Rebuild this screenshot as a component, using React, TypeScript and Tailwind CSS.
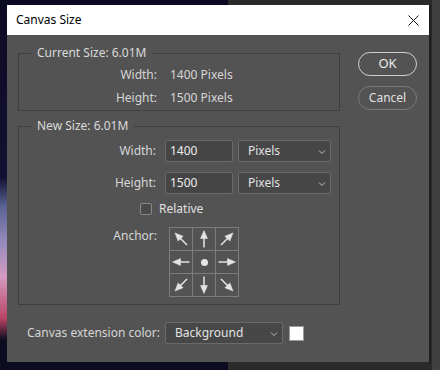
import React from "react";

const font = "font-['Noto_Sans','Liberation_Sans',sans-serif]";

function Arrow({ angle }: { angle: number }) {
  return (
    <svg width="22" height="22" viewBox="0 0 22 22">
      <g transform={`rotate(${angle} 11 11)`} fill="#e4e4e4" stroke="#e4e4e4">
        <polygon points="11,2.5 7.5,10.5 14.5,10.5" strokeWidth="0.5" />
        <line x1="11" y1="10" x2="11" y2="19.5" strokeWidth="1.5" />
      </g>
    </svg>
  );
}

function Chevron() {
  return (
    <svg width="8" height="6" viewBox="0 0 8 6" className="mt-[2px]">
      <path d="M1 1.5 L4 4.5 L7 1.5" fill="none" stroke="#bdbdbd" strokeWidth="1" />
    </svg>
  );
}

function Select({ value, className }: { value: string; className: string }) {
  return (
    <div
      className={`flex h-[22px] items-center justify-between rounded-[2px] border border-[#6a6a6a] bg-[#474747] pl-[9px] pr-[4px] text-[12px] text-[#e2e2e2] ${className}`}
    >
      <span>{value}</span>
      <Chevron />
    </div>
  );
}

function Group({ legend, className, children }: { legend: string; className: string; children: React.ReactNode }) {
  return (
    <div className={`relative border border-[#3f3f3f] ${className}`}>
      <span className="absolute left-[12px] top-[-9px] bg-[#535353] px-[6px] text-[12px] leading-[16px] text-[#dadada]">
        {legend}
      </span>
      {children}
    </div>
  );
}

function Field({ label, value }: { label: string; value: string }) {
  return (
    <div className="flex h-[22px] items-center">
      <span className="w-[138px] pr-[1px] text-right">{label}</span>
      <div className="ml-[8px] flex h-[22px] w-[68px] items-center rounded-[2px] border border-[#696969] bg-[#454545] pl-[4px] text-[#ececec]">
        {value}
      </div>
      <Select value="Pixels" className="ml-[5px] w-[93px]" />
    </div>
  );
}

export default function App() {
  const anchors: (number | null)[] = [-45, 0, 45, -90, null, 90, -135, 180, 135];

  return (
    <div className={`relative h-[370px] w-[440px] overflow-hidden bg-[#2a2a2a] ${font}`}>
      <div className="absolute inset-y-0 left-0 w-[228px] bg-[linear-gradient(180deg,#0c0a22_0%,#131133_48%,#5a6494_56%,#9a8cc0_66%,#d49ac0_75%,#b84464_86%,#0b0c20_92%)]" />
      <div className="absolute inset-y-0 right-0 w-[8px] bg-[#404040]" />

      <div className="absolute left-[7px] top-[5px] flex h-[357px] w-[422px] flex-col bg-[#535353] shadow-[2px_0_0_#1f1f1f]">
        <div className="flex h-[30px] items-center justify-between bg-white pl-[9px] pr-[10px] text-[12px] text-black">
          <span>Canvas Size</span>
          <svg width="11" height="11" viewBox="0 0 11 11">
            <path d="M0.5 0.5 L10.5 10.5 M10.5 0.5 L0.5 10.5" stroke="#111" strokeWidth="1" />
          </svg>
        </div>

        <div className="flex flex-col px-[11px] pt-[18px] text-[12px] text-[#d6d6d6]">
          <div className="flex">
            <div className="flex w-[322px] flex-col">
              <Group legend="Current Size: 6.01M" className="h-[58px]">
                <div className="grid grid-cols-[138px_1fr] gap-x-[13px] gap-y-[7px] pt-[13px] leading-[16px]">
                  <span className="text-right">Width:</span>
                  <span>1400 Pixels</span>
                  <span className="text-right">Height:</span>
                  <span>1500 Pixels</span>
                </div>
              </Group>

              <Group legend="New Size: 6.01M" className="mt-[15px] h-[179px]">
                <div className="flex flex-col pt-[13px]">
                  <Field label="Width:" value="1400" />
                  <div className="mt-[10px]">
                    <Field label="Height:" value="1500" />
                  </div>
                  <div className="mt-[9px] flex h-[12px] items-center pl-[121px]">
                    <span className="h-[12px] w-[12px] rounded-[2px] border border-[#8a8a8a] bg-[#4a4a4a]" />
                    <span className="ml-[7px] text-[#e0e0e0]">Relative</span>
                  </div>
                  <div className="mt-[12px] flex">
                    <span className="w-[138px] pt-[1px] text-right leading-[16px]">Anchor:</span>
                    <div className="ml-[12px] grid w-[70px] grid-cols-3 border-l border-t border-[#7c7c7c]">
                      {anchors.map((a, i) => (
                        <div key={i} className="flex h-[23px] w-[23px] items-center justify-center border-b border-r border-[#7c7c7c]">
                          {a === null ? (
                            <span className="h-[7px] w-[7px] rounded-full bg-[#e4e4e4]" />
                          ) : (
                            <Arrow angle={a} />
                          )}
                        </div>
                      ))}
                    </div>
                  </div>
                </div>
              </Group>
            </div>

            <div className="ml-[18px] mt-[-1px] flex w-[59px] flex-col gap-[10px]">
              <button className="h-[24px] rounded-full border border-[#cfcfcf] text-[13px] text-[#eaeaea]">OK</button>
              <button className="h-[24px] rounded-full border border-[#7a7a7a] text-[12px] text-[#e0e0e0]">Cancel</button>
            </div>
          </div>

          <div className="mt-[17px] flex items-center">
            <span className="ml-[9px] w-[138px]">Canvas extension color:</span>
            <Select value="Background" className="w-[118px]" />
            <span className="ml-[6px] h-[15px] w-[15px] border border-[#9a9a9a] bg-white" />
          </div>
        </div>
      </div>
    </div>
  );
}
